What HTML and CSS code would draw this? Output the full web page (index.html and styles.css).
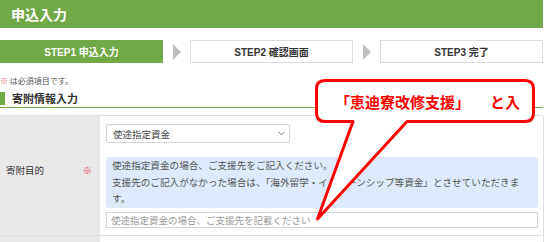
FILE: index.html
```html
<!DOCTYPE html>
<html lang="ja">
<head>
<meta charset="utf-8">
<link rel="stylesheet" href="styles.css">
</head>
<body>
<div class="page">
  <header class="title-bar">申込入力</header>
  <ol class="steps">
    <li class="step step-active">STEP1 申込入力</li>
    <li class="step-arrow"><svg width="8" height="16" viewBox="0 0 8 16"><path d="M0 0 L8 8 L0 16 Z" fill="#bdbdbd"/></svg></li>
    <li class="step">STEP2 確認画面</li>
    <li class="step-arrow"><svg width="8" height="16" viewBox="0 0 8 16"><path d="M0 0 L8 8 L0 16 Z" fill="#bdbdbd"/></svg></li>
    <li class="step">STEP3 完了</li>
  </ol>
  <p class="note"><span class="req">※</span> は必須項目です。</p>
  <div class="section"><h2 class="section-title">寄附情報入力</h2></div>
  <div class="form-table">
    <div class="label-cell"><span>寄附目的</span><span class="req">※</span></div>
    <div class="field-cell">
      <div class="select-box"><span>使途指定資金</span><svg width="7" height="5" viewBox="0 0 7 5"><path d="M0.5 0.8 L3.5 3.8 L6.5 0.8" fill="none" stroke="#777" stroke-width="1"/></svg></div>
      <div class="info-box">
        <div class="info-line">使途指定資金の場合、ご支援先をご記入ください。</div>
        <div class="info-line">支援先のご記入がなかった場合は、「海外留学・インターンシップ等資金」とさせていただきま</div>
        <div class="info-line">す。</div>
      </div>
      <input class="text-input" type="text" placeholder="使途指定資金の場合、ご支援先を記載ください">
    </div>
    <div class="label-cell label-next"></div>
    <div class="field-cell field-next"></div>
  </div>
  <svg class="callout-shape" width="550" height="242" viewBox="0 0 550 242">
    <path d="M325 80.5 H525 Q533.5 80.5 533.5 89 V113 Q533.5 121.5 525 121.5 H407 L317.5 219 L353 121.5 H325 Q316.5 121.5 316.5 113 V89 Q316.5 80.5 325 80.5 Z" fill="#fff" stroke="#ff0000" stroke-width="3" stroke-linejoin="round"/>
  </svg>
  <div class="callout-text">「恵迪寮改修支援」<span class="callout-tail">と入</span></div>
</div>
</body>
</html>
```
FILE: styles.css
```css
* { box-sizing: border-box; }
html, body { margin: 0; padding: 0; background: #fff; }
body {
  font-family: "Noto Sans CJK JP", "Noto Sans", "DejaVu Sans", sans-serif;
  color: #333;
  width: 550px;
  height: 242px;
  overflow: hidden;
}
.page { position: relative; width: 543px; }
.title-bar {
  height: 28px;
  background: #6faa46;
  color: #fff;
  font-weight: 700;
  font-size: 14px;
  line-height: 28px;
  padding-left: 11px;
}
.steps {
  list-style: none;
  margin: 12px 0 0;
  padding: 0;
  display: flex;
  height: 23px;
}
.step {
  flex: 1;
  border: 1px solid #dcdcdc;
  background: #fff;
  font-size: 10px;
  font-weight: 700;
  display: flex;
  align-items: center;
  justify-content: center;
  color: #333;
  font-family: "Liberation Sans", "Noto Sans CJK JP", sans-serif;
}
.step-active { background: #6faa46; border-color: #6faa46; color: #fff; }
.step-arrow {
  width: 27px;
  display: flex;
  align-items: center;
  justify-content: center;
}
.note {
  margin: 12px 0 0;
  font-size: 8px;
  line-height: 12px;
  color: #555;
}
.req { color: #e8474f; }
.section {
  margin-top: 5px;
  border-bottom: 1px solid #6faa46;
  padding-bottom: 2px;
}
.section-title {
  margin: 0;
  border-left: 5px solid #6faa46;
  padding-left: 7px;
  height: 13px;
  font-size: 11px;
  line-height: 13px;
  font-weight: 700;
  color: #333;
}
.form-table {
  margin-top: 7px;
  display: grid;
  grid-template-columns: 100px 1fr;
  border-top: 1px solid #dedede;
}
.label-cell {
  background: #e8e8e8;
  display: flex;
  align-items: center;
  justify-content: space-between;
  padding: 0 8px 12px 6px;
  font-size: 9.5px;
  color: #333;
  border-bottom: 1px solid #dedede;
}
.field-cell {
  padding: 8px 5px 7px 6px;
  border-right: 1px solid #dedede;
  border-bottom: 1px solid #dedede;
}
.select-box {
  width: 184px;
  height: 19px;
  border: 1px solid #d4d4d4;
  border-radius: 2px;
  display: flex;
  align-items: center;
  justify-content: space-between;
  padding: 0 4px 0 6px;
  font-size: 9.5px;
  color: #444;
}
.info-box {
  margin-top: 14px;
  height: 51px;
  background: #deeafb;
  border-radius: 3px;
  padding: 0 6px;
  font-size: 9.6px;
  color: #555;
}
.info-line {
  height: 16.5px;
  line-height: 16.5px;
  white-space: nowrap;
}
.text-input {
  display: block;
  margin-top: 4px;
  width: 432px;
  height: 16px;
  border: 1px solid #d4d4d4;
  padding: 0 4px;
  font-family: inherit;
  font-size: 9.5px;
  outline: none;
}
.text-input::placeholder { color: #999; }
.label-next, .field-next { height: 10px; border-bottom: none; padding: 0; }
.callout-shape { position: absolute; left: 0; top: 0; }
.callout-text {
  position: absolute;
  left: 335px;
  top: 92px;
  font-size: 15px;
  line-height: 20px;
  font-weight: 700;
  color: #ff0000;
  white-space: nowrap;
}
.callout-tail { margin-left: 20px; }
```
